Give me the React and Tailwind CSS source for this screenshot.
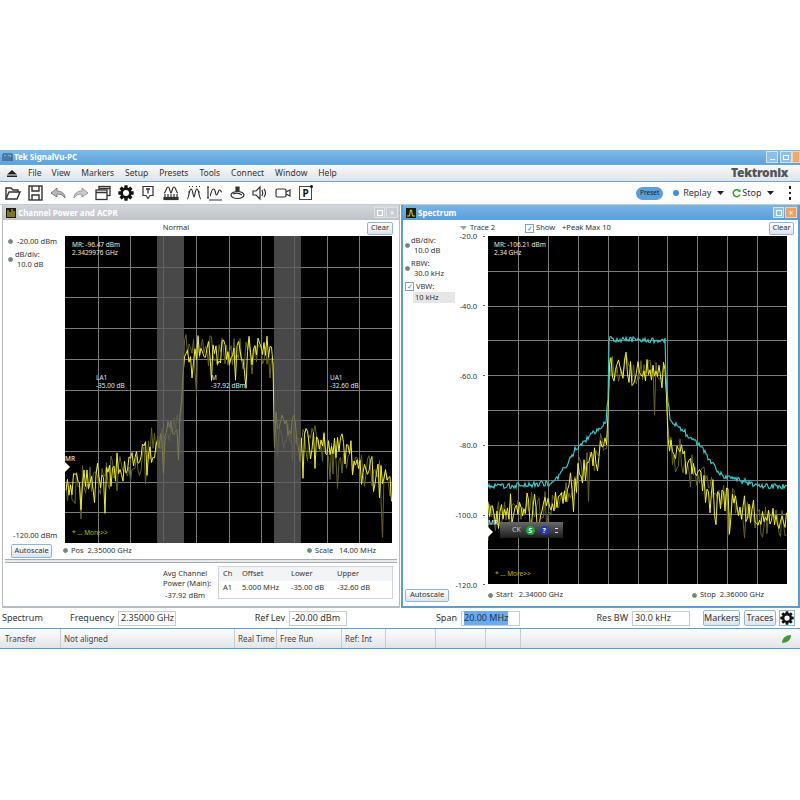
import React from "react";

function rng(seed) {
  let a = seed;
  return () => {
    a |= 0; a = (a + 0x6d2b79f5) | 0;
    let t = Math.imul(a ^ (a >>> 15), 1 | a);
    t = (t + Math.imul(t ^ (t >>> 7), 61 | t)) ^ t;
    return ((t ^ (t >>> 14)) >>> 0) / 4294967296;
  };
}
function env(pts, x) {
  for (let i = 1; i < pts.length; i++) {
    if (x <= pts[i][0]) {
      const [x0, y0] = pts[i - 1], [x1, y1] = pts[i];
      return y0 + ((y1 - y0) * (x - x0)) / Math.max(x1 - x0, 0.001);
    }
  }
  return pts[pts.length - 1][1];
}
function noisy(pts, seed, up, down, spikeP, spike, step = 1) {
  const r = rng(seed);
  const out = [];
  const x0 = pts[0][0], x1 = pts[pts.length - 1][0];
  for (let x = x0; x <= x1; x += step) {
    let y = env(pts, x) + (r() - 0.5) * up + (r() * r()) * down;
    if (r() < spikeP) y += r() * spike;
    out.push(`${x},${y.toFixed(1)}`);
  }
  return out.join(" ");
}

const leftEnv = [[65, 482], [110, 468], [153, 440], [180, 416], [183, 346], [272, 346], [273, 416], [300, 432], [343, 444], [391, 484]];
const specYellow = [[488, 507], [560, 500], [572, 478], [592, 456], [607, 440], [609, 364], [666, 364], [668, 438], [692, 462], [718, 490], [752, 510], [787, 515]];
const specCyan = [[488, 487], [550, 483], [555, 480], [563, 470], [575, 450], [585, 440], [600, 428], [606, 420], [608, 400], [609, 339], [612, 339], [665, 340], [666, 380], [670, 420], [680, 428], [700, 445], [710, 460], [722, 475], [740, 480], [760, 486], [787, 487]];

function Grid({ x, y, w, h }) {
  const lines = [];
  for (let i = 1; i < 10; i++) {
    const vx = Math.round(x + (w * i) / 10) + 0.5, hy = Math.round(y + (h * i) / 10) + 0.5;
    lines.push(<line key={"v" + i} x1={vx} x2={vx} y1={y} y2={y + h} stroke="#7a7a7a" strokeWidth="1" />);
    lines.push(<line key={"h" + i} x1={x} x2={x + w} y1={hy} y2={hy} stroke="#7a7a7a" strokeWidth="1" />);
  }
  return <>{lines}</>;
}

function Btn({ children, className = "" }) {
  return (
    <div className={"flex items-center justify-center border border-[#8fb8d8] bg-gradient-to-b from-[#ffffff] to-[#dde3ea] rounded-[2px] text-[#333] " + className}>
      {children}
    </div>
  );
}
const Dot = () => <span className="inline-block w-[5px] h-[5px] rounded-full bg-[#5f8f6f] border border-[#888] shrink-0" />;

function Gear({ size = 16 }) {
  const teeth = [];
  for (let i = 0; i < 4; i++) {
    teeth.push(<rect key={i} x="9.500" y="0.500" width="5" height="23" rx="0.8" transform={`rotate(${i * 45} 12 12)`} fill="#111" />);
  }
  return (
    <svg width={size} height={size} viewBox="0 0 24 24">
      {teeth}
      <circle cx="12" cy="12" r="8.500" fill="#111" />
      <circle cx="12" cy="12" r="4.500" fill="#fff" />
    </svg>
  );
}

const S = { fill: "none", stroke: "#333", strokeWidth: 1.2 };
const icons = [
  [16, <g {...S} strokeWidth="1.4"><path d="M1 14V3h5l2 2h5v2" /><path d="M1 14l3-7h11l-3 7z" /></g>],
  [15, <g {...S} strokeWidth="1.4"><rect x="1" y="1" width="13" height="14" /><path d="M4 1v5h7V1M4 15v-5h7v5" /></g>],
  [16, <g fill="#bbb" stroke="#666" strokeWidth="0.8"><path d="M1 8l6-5v3c5 0 8 3 8 7-2-3-4-4-8-4v3z" /></g>],
  [16, <g fill="#ccc" stroke="#888" strokeWidth="0.8"><path d="M15 8L9 3v3c-5 0-8 3-8 7 2-3 4-4 8-4v3z" /></g>],
  [16, <g {...S} strokeWidth="1.3"><rect x="4" y="1.500" width="11" height="9" /><rect x="1" y="5" width="11" height="9.500" fill="#fff" /><path d="M1 7.500h11M4 3.500h11" /></g>],
  [16, null],
  [12, <g {...S}><path d="M1 1.500h10v9H8l-2 3-2-3H1z" /><path d="M4 4h4M6 4v4.500" strokeWidth="1.3" /></g>],
  [16, <g {...S}><path d="M1 8c2 0 2-6 4-6s2 6 3 6 1-6 3-6 2 6 4 6" /><path d="M2 9v3M5 9v3M8 9v3M11 9v3M14 9v3" /><rect x="1" y="12.500" width="14" height="2" fill="#333" /></g>],
  [16, <g {...S}><path d="M1 14c2 0 2-10 4-10s2 8 3 8 1-8 3-8 2 10 4 10" /><path d="M3 1.500h1M6 1.500h1M10 1.500h1M13 1.500h1M2 7h1M13 7h1" /></g>],
  [16, <g {...S}><path d="M3 11c1 0 1-7 3.500-7S8 10 9.500 10 11 5 12.500 5s1 2 2.500 2" /><path d="M1 2v11M0 2h2M0 13h2M2 15h13" /></g>],
  [15, <g {...S}><ellipse cx="7.500" cy="10" rx="6.500" ry="3.500" /><path d="M3 9c2-1 6-1 9 1" /><path d="M6 2h3v4H6z" fill="#333" /></g>],
  [16, <g {...S}><path d="M1 6h3l4-4v12l-4-4H1z" /><path d="M10 5c1 2 1 4 0 6M12 4c2 2 2 6 0 8" /></g>],
  [16, <g {...S}><rect x="1" y="4" width="10" height="8" rx="1.500" /><path d="M11 7l4-2v6l-4-2" /></g>],
  [15, null],
];

function Toolbar() {
  const gaps = [0, 7, 7, 7, 6, 7, 8, 9, 7, 5, 7, 7, 7, 7];
  return (
    <div className="flex items-center h-[23px] pl-[5px] bg-white border-b border-[#c4c9ce]">
      {icons.map(([w, g], i) => (
        <div key={i} className="flex items-center justify-center" style={{ width: w, marginLeft: gaps[i] }}>
          {i === 5 ? <Gear size={16} /> : i === 13 ? (
            <div className="relative flex items-center justify-center w-[13px] h-[14px] border border-[#444] text-[10px] font-bold leading-none text-[#111]">
              P
              <span className="absolute -top-[2px] -right-[2px] w-[3px] h-[3px] rounded-full bg-[#111]" />
            </div>
          ) : (
            <svg width={w} height="16" viewBox={`0 0 ${w} 16`}>{g}</svg>
          )}
        </div>
      ))}
      <div className="flex-1" />
      <div className="flex items-center justify-center w-[27px] h-[13px] rounded-full bg-[#5a9fd6] text-[6.500px] text-[#123]">Preset</div>
      <span className="ml-[10px] w-[6px] h-[6px] rounded-full bg-[#3d93d8]" />
      <span className="ml-[4px] text-[9px] text-[#333]">Replay</span>
      <svg className="ml-[6px]" width="7" height="4" viewBox="0 0 7 4"><path d="M0 0h7L3.500 4z" fill="#222" /></svg>
      <svg className="ml-[8px]" width="9" height="9" viewBox="0 0 9 9"><path d="M7.500 2A3.500 3.500 0 1 0 8 5.500" fill="none" stroke="#2fa52f" strokeWidth="1.500" /><path d="M5.500 2.500L8.500 0v3z" fill="#2fa52f" /></svg>
      <span className="ml-[1px] text-[9px] text-[#333]">Stop</span>
      <svg className="ml-[5px]" width="7" height="4" viewBox="0 0 7 4"><path d="M0 0h7L3.500 4z" fill="#222" /></svg>
      <div className="ml-[15px] mr-[9px] flex flex-col gap-[3px]">
        <span className="w-[2.500px] h-[2.500px] bg-[#222]" />
        <span className="w-[2.500px] h-[2.500px] bg-[#222]" />
        <span className="w-[2.500px] h-[2.500px] bg-[#222]" />
      </div>
    </div>
  );
}

function PlotText({ className = "", children }) {
  return <div className={"absolute text-[6.500px] leading-[7.500px] whitespace-nowrap " + className}>{children}</div>;
}

function LeftPlot() {
  return (
    <div className="relative w-[327px] h-[307px] bg-black overflow-hidden">
      <svg className="absolute inset-0" width="327" height="307" viewBox="64 236 327 307">
        <Grid x={64} y={236} w={327} h={307} />
        <polyline points={noisy(leftEnv, 21, 30, 26, 0.14, 34, 1.5)} fill="none" stroke="#66661a" strokeWidth="1" />
        <polyline points={noisy(leftEnv, 5, 26, 20, 0.14, 34, 1.5)} fill="none" stroke="#f0f01e" strokeWidth="1" />
        <rect x="156" y="236" width="27" height="307" fill="#5c5c5c" fillOpacity="0.78" />
        <rect x="273" y="236" width="27" height="307" fill="#5c5c5c" fillOpacity="0.78" />
      </svg>
      <PlotText className="left-[7px] top-[5px] text-[#f2e8c8]">MR: -96.47 dBm<br />2.3429976 GHz</PlotText>
      <PlotText className="left-[31px] top-[138px] text-[#d8e8f5]">LA1<br />-35.00 dB</PlotText>
      <PlotText className="left-[146px] top-[138px] text-[#d8e8f5]">M<br />-37.92 dBm</PlotText>
      <PlotText className="left-[265px] top-[138px] text-[#d8e8f5]">UA1<br />-32.60 dB</PlotText>
      <PlotText className="left-[0px] top-[219px] text-white">MR</PlotText>
      <svg className="absolute left-0 top-[226px]" width="6" height="10" viewBox="0 0 6 10"><path d="M0 0l5 5-5 5z" fill="#fff" /></svg>
      <PlotText className="left-[7px] top-[293px] text-[#b8b800]">* ... More&gt;&gt;</PlotText>
    </div>
  );
}

function RightPlot() {
  return (
    <div className="relative w-[299px] h-[348px] bg-black overflow-hidden">
      <svg className="absolute inset-0" width="299" height="348" viewBox="488 236 299 348">
        <Grid x={488} y={236} w={299} h={348} />
        <polyline points={noisy(specYellow, 31, 28, 24, 0.1, 34, 1.5)} fill="none" stroke="#66661a" strokeWidth="1" />
        <polyline points={noisy(specYellow, 9, 26, 20, 0.1, 30, 1.5)} fill="none" stroke="#f0f01e" strokeWidth="1" />
        <polyline points={noisy(specCyan, 13, 6, 1, 0, 0)} fill="none" stroke="#38d0d0" strokeWidth="1.100" />
      </svg>
      <PlotText className="left-[6px] top-[5px] text-[#f2e8c8]">MR: -106.21 dBm<br />2.34 GHz</PlotText>
      <PlotText className="left-[0px] top-[283px] text-white">MR</PlotText>
      <svg className="absolute left-0 top-[291px]" width="6" height="10" viewBox="0 0 6 10"><path d="M0 0l5 5-5 5z" fill="#fff" /></svg>
      <PlotText className="left-[7px] top-[334px] text-[#b8b800]">* ... More&gt;&gt;</PlotText>
      <div className="absolute left-[12px] top-[286px] w-[63px] h-[16px] flex items-center pl-[12px] bg-gradient-to-b from-[#6a6a6a] to-[#1e1e1e] text-[7px] text-[#ccc]">
        CK
        <span className="ml-[5px] flex items-center justify-center w-[9px] h-[9px] rounded-full bg-[#1fa82f] text-[7px] font-bold leading-none text-white">S</span>
        <span className="ml-[5px] flex items-center justify-center w-[9px] h-[9px] rounded-full bg-[#2438b8] text-[7px] font-bold leading-none text-white">?</span>
        <span className="ml-[6px] flex flex-col gap-[3px]">
          <span className="w-[3px] h-[1px] bg-[#ddd]" />
          <span className="w-[3px] h-[1px] bg-[#ddd]" />
        </span>
      </div>
    </div>
  );
}

function PanelHeader({ active, title, glyph }) {
  return (
    <div className={"flex items-center h-[15px] pl-[3px] pr-[1px] " + (active ? "bg-gradient-to-b from-[#78b4e6] to-[#5a9ed8]" : "bg-gradient-to-b from-[#d2d5d9] to-[#c0c3c8]")}>
      <div className="flex items-center justify-center w-[10px] h-[10px] bg-[#1c1c10]">
        <svg width="8" height="8" viewBox="0 0 8 8">
          {glyph === "bars"
            ? <path d="M1 8V1M3 8V3M5 8V0M7 8V2" stroke="#d8d820" strokeWidth="1" />
            : <path d="M0 7h2.500L3.500 1h1l1 6H8" stroke="#d8d820" strokeWidth="1" fill="none" />}
        </svg>
      </div>
      <span className="ml-[2px] text-[8px] font-bold text-white">{title}</span>
      <div className="flex-1" />
      <div className={"w-[11px] h-[11px] border flex items-center justify-center " + (active ? "border-[#d5e8f7] bg-[#8dc0ea]" : "border-[#dfe1e4] bg-[#c8cbcf]")}>
        <span className="w-[6px] h-[6px] border border-white" />
      </div>
      <div className={"ml-[1px] w-[12px] h-[11px] border flex items-center justify-center text-[8px] leading-none text-white " + (active ? "border-[#f3d3b8] bg-[#f0a060]" : "border-[#dfe1e4] bg-[#c8cbcf]")}>×</div>
    </div>
  );
}

function LeftPanel() {
  return (
    <div className="w-[398px] flex flex-col border border-[#b8bcc0] border-t-0 border-b-[2px] bg-white">
      <PanelHeader title="Channel Power and ACPR" glyph="bars" />
      <div className="flex items-center h-[16px] pr-[6px]">
        <div className="flex-1 text-center text-[7.500px] pr-[18px] text-[#333]">Normal</div>
        <Btn className="w-[26px] h-[13px] text-[7.500px]">Clear</Btn>
      </div>
      <div className="flex h-[307px] pr-[7px]">
        <div className="w-[62px] flex flex-col justify-between text-[7.500px] leading-[10px] text-[#333]">
          <div className="pl-[5px]">
            <div className="flex items-center"><Dot /><span className="ml-[4px]">-20.00 dBm</span></div>
            <div className="mt-[3px] flex items-center">
              <Dot />
              <div className="ml-[2px]">
                <div>dB/div:</div>
                <div className="pl-[2px]">10.0 dB</div>
              </div>
            </div>
          </div>
          <div className="pl-[10px] pb-[3px]">-120.00 dBm</div>
        </div>
        <LeftPlot />
      </div>
      <div className="flex items-center h-[15px] pl-[8px] pr-[23px] text-[7.500px] text-[#333]">
        <Btn className="w-[41px] h-[14px]">Autoscale</Btn>
        <span className="ml-[11px] flex items-center gap-[3px]"><Dot />Pos&nbsp; 2.35000 GHz</span>
        <div className="flex-1" />
        <span className="flex items-center gap-[3px]"><Dot />Scale&nbsp;&nbsp; 14.00 MHz</span>
      </div>
      <div className="mx-[2px] mt-[1px] h-[4px] border-y border-[#a8acb0] bg-[#e8eaec]" />
      <div className="flex items-start pr-[6px] pt-[3px] pb-[2px] text-[7.500px] text-[#333]">
        <div className="ml-[160px] w-[50px] leading-[10px] pt-[2px] whitespace-nowrap">
          <div>Avg Channel</div>
          <div>Power (Main):</div>
          <div className="mt-[2px] pl-[2px]">-37.92 dBm</div>
        </div>
        <div className="ml-[5px] w-[175px] h-[33px] border border-[#d0d4d8] flex flex-col">
          <div className="flex h-[14px] items-center bg-[#f3f4f5]">
            <span className="pl-[4px] w-[19px]">Ch</span><span className="pl-[4px] w-[49px]">Offset</span><span className="pl-[4px] w-[46px]">Lower</span><span className="pl-[4px] w-[47px]">Upper</span>
          </div>
          <div className="flex h-[14px] items-center">
            <span className="pl-[4px] w-[19px]">A1</span><span className="pl-[4px] w-[49px]">5.000 MHz</span><span className="pl-[4px] w-[46px]">-35.00 dB</span><span className="pl-[4px] w-[47px]">-32.60 dB</span>
          </div>
        </div>
      </div>
    </div>
  );
}

function RightPanel() {
  return (
    <div className="w-[399px] flex flex-col border-x-[2px] border-b-[2px] border-[#5a9ed8] bg-white">
      <PanelHeader active title="Spectrum" glyph="step" />
      <div className="flex items-center h-[16px] pr-[4px] text-[7.500px] text-[#333]">
        <svg className="ml-[57px]" width="7" height="4" viewBox="0 0 7 4"><path d="M0 0h7L3.500 4z" fill="#9aa0a6" /></svg>
        <span className="ml-[3px]">Trace 2</span>
        <span className="ml-[30px] flex items-center justify-center w-[9px] h-[9px] border border-[#6fa8d0] text-[7px] leading-none text-[#3a80b0]">✓</span>
        <span className="ml-[2px]">Show</span>
        <span className="ml-[7px]">+Peak Max 10</span>
        <div className="flex-1" />
        <Btn className="w-[25px] h-[13px]">Clear</Btn>
      </div>
      <div className="flex h-[348px] pr-[10px]">
        <div className="w-[85px] flex text-[7.500px] leading-[10px] text-[#333]">
          <div className="w-[52px] pl-[2px]">
            <div className="flex items-center"><Dot />
              <div className="ml-[1px] -mt-[1px]"><div>dB/div:</div><div className="pl-[3px]">10.0 dB</div></div>
            </div>
            <div className="mt-[3px] flex items-center"><Dot />
              <div className="ml-[1px]"><div>RBW:</div><div className="pl-[3px]">30.0 kHz</div></div>
            </div>
            <div className="mt-[3px] flex items-center">
              <span className="flex items-center justify-center w-[9px] h-[9px] border border-[#6fa8d0] text-[7px] leading-none text-[#3a80b0]">✓</span>
              <span className="ml-[2px]">VBW:</span>
            </div>
            <div className="mt-[1px] ml-[8px] h-[11px] bg-[#e6e6e6] pl-[2px] leading-[11px]">10 kHz</div>
          </div>
          <div className="flex-1 flex flex-col justify-between -mt-[5px] -mb-[6px] items-end pr-[3px]">
            {["-20.0", "-40.0", "-60.0", "-80.0", "-100.0", "-120.0"].map((t) => (
              <span key={t} className="flex items-center gap-[6px]">{t}<span className="w-[2px] h-[1px] bg-[#666]" /></span>
            ))}
          </div>
        </div>
        <RightPlot />
      </div>
      <div className="flex items-center h-[22px] pl-[2px] pr-[34px] text-[7.500px] text-[#333]">
        <Btn className="w-[44px] h-[13px]">Autoscale</Btn>
        <span className="ml-[39px] flex items-center gap-[3px]"><Dot />Start&nbsp;&nbsp; 2.34000 GHz</span>
        <div className="flex-1" />
        <span className="flex items-center gap-[3px]"><Dot />Stop&nbsp; 2.36000 GHz</span>
      </div>
    </div>
  );
}

function Field({ label, value, lw, w, ml, selected }) {
  return (
    <div className="flex items-center" style={{ marginLeft: ml }}>
      <span className="text-right whitespace-nowrap" style={{ width: lw }}>{label}</span>
      <div className="ml-[4px] h-[15px] border border-[#c8ccd0] flex items-center pl-[2px] whitespace-nowrap" style={{ width: w }}>
        <span className={selected ? "bg-[#6aaaf0] text-[#234]" : ""}>{value}</span>
      </div>
    </div>
  );
}

export default function App() {
  const cells = [["Transfer", 59], ["Not aligned", 174], ["Real Time", 42], ["Free Run", 65], ["Ref: Int", 44], ["", 50], ["", 50], ["", 35]];
  return (
    <div className="w-[800px] h-[800px] bg-white pt-[150px] font-['Noto_Sans',sans-serif] overflow-hidden">
      <div className="flex items-center h-[14px] pl-[2px] pr-0 bg-gradient-to-b from-[#80bbe9] to-[#5aa2dc]">
        <svg width="11" height="10" viewBox="0 0 11 10"><path d="M1 9V2h9v7M3 9V4M5 9V3M7 9V4M9 9V5" stroke="#2b4a6a" strokeWidth="1" fill="none" /></svg>
        <span className="ml-[1px] text-[8px] font-bold text-white">Tek SignalVu-PC</span>
        <div className="flex-1" />
        <div className="w-[12px] h-[12px] border border-[#cfe3f5] bg-[#8cc0ea] flex items-end justify-center pb-[2px]"><span className="w-[5px] h-[1px] bg-white" /></div>
        <div className="ml-[2px] w-[12px] h-[12px] border border-[#cfe3f5] bg-[#8cc0ea] flex items-center justify-center"><span className="w-[6px] h-[5px] border border-white" /></div>
        <div className="w-[8px] h-[12px] bg-[#f0a868] border border-[#f3d3b8]" />
      </div>
      <div className="flex items-center h-[18px] pl-[7px] pr-[12px] bg-gradient-to-b from-[#f8f9fa] to-[#dfe3e7] border-y border-[#6aa8dc] text-[8.500px] text-[#333]">
        <svg width="10" height="7" viewBox="0 0 10 7"><path d="M5 0l5 4.500H0zM0 5.500h10V7H0z" fill="#222" /></svg>
        <span className="ml-[11px]">File</span>
        <span className="ml-[10px]">View</span>
        <span className="ml-[11px]">Markers</span>
        <span className="ml-[11px]">Setup</span>
        <span className="ml-[11px]">Presets</span>
        <span className="ml-[11px]">Tools</span>
        <span className="ml-[11px]">Connect</span>
        <span className="ml-[11px]">Window</span>
        <span className="ml-[11px]">Help</span>
        <div className="flex-1" />
        <span className="text-[12px] font-black tracking-[-0.3px] text-[#555]">Tektronix</span>
      </div>
      <Toolbar />
      <div className="flex pl-[2px] gap-[1px]">
        <LeftPanel />
        <RightPanel />
      </div>
      <div className="flex items-center h-[20px] text-[9px] text-[#333] bg-white">
        <span className="ml-[2px] w-[52px]">Spectrum</span>
        <Field label="Frequency" value="2.35000 GHz" lw={60} w={58} ml={0} />
        <Field label="Ref Lev" value="-20.00 dBm" lw={40} w={58} ml={69} />
        <Field label="Span" value="20.00 MHz" lw={40} w={59} ml={70} selected />
        <Field label="Res BW" value="30.0 kHz" lw={40} w={58} ml={68} />
        <Btn className="ml-[13px] w-[37px] h-[16px]">Markers</Btn>
        <Btn className="ml-[4px] w-[32px] h-[16px]">Traces</Btn>
        <div className="ml-[3px] w-[16px] h-[16px] border border-[#8fb8d8] flex items-center justify-center"><Gear size={14} /></div>
      </div>
      <div className="flex items-center h-[21px] border-y-[1.500px] border-[#5a9ed8] bg-gradient-to-b from-[#fdfdfd] to-[#e2e4e7] text-[8px] text-[#444] pl-[2px]">
        {cells.map(([t, w], i) => (
          <div key={i} className="h-full flex items-center pl-[3px] border-r border-[#c8ccd0]" style={{ width: w }}>{t}</div>
        ))}
        <div className="flex-1" />
        <svg className="mr-[8px]" width="11" height="10" viewBox="0 0 11 10"><path d="M1 9C1 4 5 1 10 1c0 5-4 8-9 8z" fill="#3f9a3f" /></svg>
      </div>
    </div>
  );
}
